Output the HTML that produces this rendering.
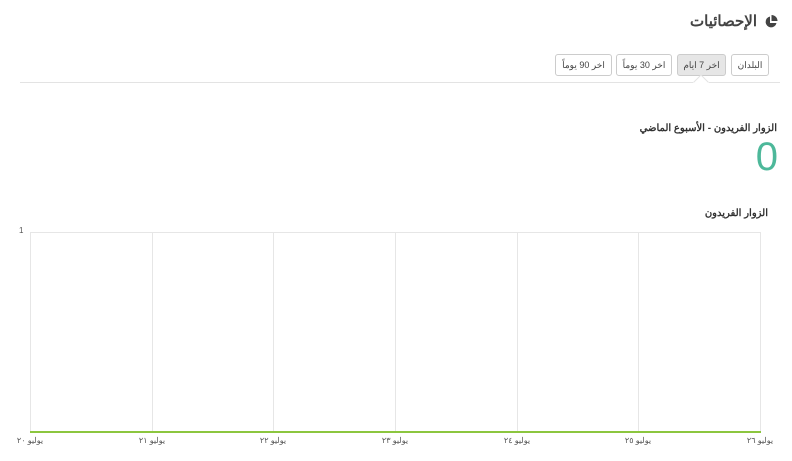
<!DOCTYPE html>
<html dir="rtl"><head><meta charset="utf-8"><style>
body{margin:0;width:792px;height:461px;background:#fff;font-family:"Liberation Sans","Noto Sans CJK SC",sans-serif;color:#333;position:relative;overflow:hidden}
.a{position:absolute;white-space:nowrap}
.btn{position:absolute;top:54px;height:20px;border:1px solid #ccc;border-radius:3px;background:#fff;font-size:9px;color:#444;text-align:center;line-height:20px;box-sizing:border-box;height:22px}
.g{position:absolute;top:232px;width:1px;height:200px;background:#e6e6e6}
.l{position:absolute;top:436px;font-size:8px;color:#555;transform:translateX(-50%);white-space:nowrap}
</style></head><body>
<div class="a" style="right:35px;top:12px;font-size:15px;font-weight:bold;color:#444">الإحصائيات</div>
<svg class="a" style="left:764px;top:15px" width="14" height="14" viewBox="0 0 14 14"><path d="M6 1.5A5.5 5.5 0 1 0 12.5 8H6Z" fill="#444"/><path d="M7.5 0A6 6 0 0 1 13.5 6H7.5Z" fill="#444"/></svg>
<div class="btn" style="left:731px;width:38px">البلدان</div>
<div class="btn" style="left:677px;width:49px;background:#e6e6e6">اخر 7 ايام</div>
<div class="btn" style="left:616px;width:56px">اخر 30 يوماً</div>
<div class="btn" style="left:555px;width:57px">اخر 90 يوماً</div>
<div class="a" style="left:20px;top:82px;width:760px;height:1px;background:#e3e3e3"></div>
<svg class="a" style="left:693px;top:75px" width="16" height="9"><path d="M0 8L8 0L16 8" fill="#fff" stroke="#e3e3e3"/><rect x="0" y="7.5" width="16" height="2" fill="#fff"/></svg>
<div class="a" style="right:15px;top:123px;font-size:10px;font-weight:bold;color:#333">الزوار الفريدون - الأسبوع الماضي</div>
<div class="a" style="right:14px;top:134px;font-size:40px;color:#4db89a;line-height:46px">0</div>
<div class="a" style="right:24px;top:208px;font-size:10px;font-weight:bold;color:#333">الزوار الفريدون</div>
<div class="a" style="left:19px;top:226px;font-size:8px;color:#555">1</div>
<div class="a" style="left:30px;top:232px;width:730px;height:1px;background:#e6e6e6"></div>
<div class="g" style="left:30px"></div><div class="g" style="left:152px"></div><div class="g" style="left:273px"></div><div class="g" style="left:395px"></div><div class="g" style="left:517px"></div><div class="g" style="left:638px"></div><div class="g" style="left:760px"></div>
<div class="a" style="left:30px;top:431px;width:731px;height:2px;background:#8cc63f"></div>
<div class="l" style="left:30px">يوليو ٢٠</div><div class="l" style="left:152px">يوليو ٢١</div><div class="l" style="left:273px">يوليو ٢٢</div><div class="l" style="left:395px">يوليو ٢٣</div><div class="l" style="left:517px">يوليو ٢٤</div><div class="l" style="left:638px">يوليو ٢٥</div><div class="l" style="left:760px">يوليو ٢٦</div>
</body></html>
